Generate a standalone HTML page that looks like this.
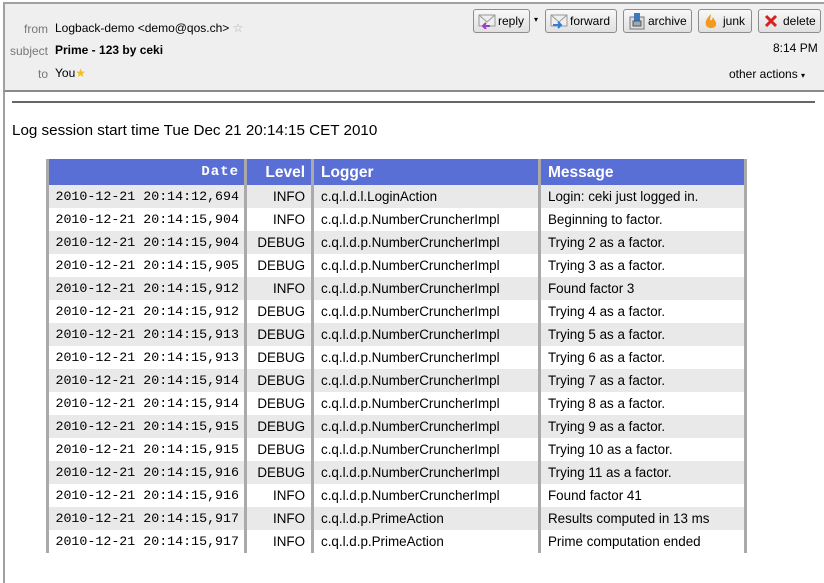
<!DOCTYPE html>
<html><head><meta charset="utf-8"><style>
*{margin:0;padding:0;box-sizing:border-box}
body{width:824px;height:583px;overflow:hidden;background:#fff;font-family:"Liberation Sans",sans-serif;position:relative;color:#000}
.hdr{position:absolute;left:3px;top:2px;width:821px;height:90px;background:#efefef;border-top:2px solid #a0a0a0;border-left:2px solid #a0a0a0;border-bottom:2px solid #8a8a8a}
.lb{position:absolute;color:#777;font-size:12px;text-align:right;width:45px}
.vl{position:absolute;font-size:12px}
.btn{position:absolute;top:9px;height:24px;border:1px solid #8d8d8d;border-radius:3px;background:linear-gradient(#f8f8f8,#e0e0e0);font-size:12px;line-height:22px;padding-left:24px}
.btn svg{position:absolute;left:4px;top:3px}
.lside{position:absolute;left:3px;top:92px;width:2px;height:491px;background:#a0a0a0}
.hr{position:absolute;left:12px;top:101px;width:803px;height:2px;background:#666}
.title{position:absolute;left:12px;top:122px;font-size:15.2px}
.tbl{position:absolute;left:46px;top:159px;width:701px}
.row{position:relative;height:23px;font-size:13.4px;line-height:23px}
.row.h{height:26px;background:#5a6fd6;color:#fff;font-weight:bold;font-size:15.5px;line-height:27px}
.row.g{background:#e9e9e9}
.c{position:absolute;top:0;height:100%;white-space:nowrap}
.d{left:0;width:199px;text-align:right;padding-right:6px;font-family:"Liberation Mono",monospace;font-size:13.3px}
.row.h .d{font-size:14px;font-weight:bold;letter-spacing:1px}
.l{left:199px;width:67px;text-align:right;padding-right:7px}
.g1{left:266px;padding-left:9px;width:227px}
.m{left:493px;padding-left:9px}
.vb{position:absolute;top:0;width:3px;height:394px;background:#aaa;z-index:2}
</style></head><body>
<div class="hdr"></div>
<div class="lb" style="left:3px;top:22px">from</div>
<div class="vl" style="left:55px;top:21px">Logback-demo &lt;demo@qos.ch&gt; <span style="color:#aaa">☆</span></div>
<div class="lb" style="left:3px;top:44px">subject</div>
<div class="vl" style="left:55px;top:43px;font-weight:bold">Prime - 123 by ceki</div>
<div class="lb" style="left:3px;top:67px">to</div>
<div class="vl" style="left:55px;top:66px">You<span style="color:#f0c020">★</span></div>

<div class="btn" style="left:473px;width:57px">
<svg width="18" height="16"><rect x="1" y="2" width="16" height="11" fill="#eee" stroke="#999"/><path d="M1 2 L9 9 L17 2" fill="none" stroke="#999"/><path d="M12 13 L5 13 M8 10 L5 13 L8 16" stroke="#9b3fc0" stroke-width="2" fill="none"/></svg>reply</div>
<div style="position:absolute;left:534px;top:15px;font-size:8px">▾</div>
<div class="btn" style="left:545px;width:72px">
<svg width="18" height="16"><rect x="1" y="2" width="16" height="11" fill="#eee" stroke="#999"/><path d="M1 2 L9 9 L17 2" fill="none" stroke="#999"/><path d="M3 12 L11 12 M8 9 L11 12 L8 15" stroke="#2f7ed8" stroke-width="2" fill="none"/></svg>forward</div>
<div class="btn" style="left:623px;width:69px">
<svg width="18" height="18"><rect x="2" y="4" width="14" height="12" fill="#ddd" stroke="#777"/><rect x="6" y="0" width="6" height="8" fill="#3a78c2"/><rect x="5" y="8" width="8" height="5" fill="#9ab" stroke="#555"/></svg>archive</div>
<div class="btn" style="left:698px;width:54px">
<svg width="16" height="18"><path d="M8 1 C3 6 2 9 3 12 C4 16 12 16 13 12 C14 9 11 7 10 4 C9 7 8 8 7 7 Z" fill="#f39a1e"/></svg>junk</div>
<div class="btn" style="left:758px;width:63px">
<svg width="16" height="16"><path d="M3 3 L13 13 M13 3 L3 13" stroke="#d8201c" stroke-width="3"/></svg>delete</div>
<div style="position:absolute;left:773px;top:41px;font-size:12px">8:14 PM</div>
<div style="position:absolute;left:729px;top:67px;font-size:12px">other actions <span style="font-size:8px">▾</span></div>

<div class="lside"></div>
<div class="hr"></div>
<div class="title">Log session start time Tue Dec 21 20:14:15 CET 2010</div>

<div class="tbl">
<div class="row h"><div class="c d">Date</div><div class="c l">Level</div><div class="c g1">Logger</div><div class="c m">Message</div></div>
<div class="row g"><div class="c d">2010-12-21 20:14:12,694</div><div class="c l">INFO</div><div class="c g1">c.q.l.d.l.LoginAction</div><div class="c m">Login: ceki just logged in.</div></div>
<div class="row"><div class="c d">2010-12-21 20:14:15,904</div><div class="c l">INFO</div><div class="c g1">c.q.l.d.p.NumberCruncherImpl</div><div class="c m">Beginning to factor.</div></div>
<div class="row g"><div class="c d">2010-12-21 20:14:15,904</div><div class="c l">DEBUG</div><div class="c g1">c.q.l.d.p.NumberCruncherImpl</div><div class="c m">Trying 2 as a factor.</div></div>
<div class="row"><div class="c d">2010-12-21 20:14:15,905</div><div class="c l">DEBUG</div><div class="c g1">c.q.l.d.p.NumberCruncherImpl</div><div class="c m">Trying 3 as a factor.</div></div>
<div class="row g"><div class="c d">2010-12-21 20:14:15,912</div><div class="c l">INFO</div><div class="c g1">c.q.l.d.p.NumberCruncherImpl</div><div class="c m">Found factor 3</div></div>
<div class="row"><div class="c d">2010-12-21 20:14:15,912</div><div class="c l">DEBUG</div><div class="c g1">c.q.l.d.p.NumberCruncherImpl</div><div class="c m">Trying 4 as a factor.</div></div>
<div class="row g"><div class="c d">2010-12-21 20:14:15,913</div><div class="c l">DEBUG</div><div class="c g1">c.q.l.d.p.NumberCruncherImpl</div><div class="c m">Trying 5 as a factor.</div></div>
<div class="row"><div class="c d">2010-12-21 20:14:15,913</div><div class="c l">DEBUG</div><div class="c g1">c.q.l.d.p.NumberCruncherImpl</div><div class="c m">Trying 6 as a factor.</div></div>
<div class="row g"><div class="c d">2010-12-21 20:14:15,914</div><div class="c l">DEBUG</div><div class="c g1">c.q.l.d.p.NumberCruncherImpl</div><div class="c m">Trying 7 as a factor.</div></div>
<div class="row"><div class="c d">2010-12-21 20:14:15,914</div><div class="c l">DEBUG</div><div class="c g1">c.q.l.d.p.NumberCruncherImpl</div><div class="c m">Trying 8 as a factor.</div></div>
<div class="row g"><div class="c d">2010-12-21 20:14:15,915</div><div class="c l">DEBUG</div><div class="c g1">c.q.l.d.p.NumberCruncherImpl</div><div class="c m">Trying 9 as a factor.</div></div>
<div class="row"><div class="c d">2010-12-21 20:14:15,915</div><div class="c l">DEBUG</div><div class="c g1">c.q.l.d.p.NumberCruncherImpl</div><div class="c m">Trying 10 as a factor.</div></div>
<div class="row g"><div class="c d">2010-12-21 20:14:15,916</div><div class="c l">DEBUG</div><div class="c g1">c.q.l.d.p.NumberCruncherImpl</div><div class="c m">Trying 11 as a factor.</div></div>
<div class="row"><div class="c d">2010-12-21 20:14:15,916</div><div class="c l">INFO</div><div class="c g1">c.q.l.d.p.NumberCruncherImpl</div><div class="c m">Found factor 41</div></div>
<div class="row g"><div class="c d">2010-12-21 20:14:15,917</div><div class="c l">INFO</div><div class="c g1">c.q.l.d.p.PrimeAction</div><div class="c m">Results computed in 13 ms</div></div>
<div class="row"><div class="c d">2010-12-21 20:14:15,917</div><div class="c l">INFO</div><div class="c g1">c.q.l.d.p.PrimeAction</div><div class="c m">Prime computation ended</div></div>
<div class="vb" style="left:0"></div><div class="vb" style="left:198px"></div><div class="vb" style="left:265px"></div><div class="vb" style="left:492px"></div><div class="vb" style="left:698px"></div>
</div>
</body></html>
